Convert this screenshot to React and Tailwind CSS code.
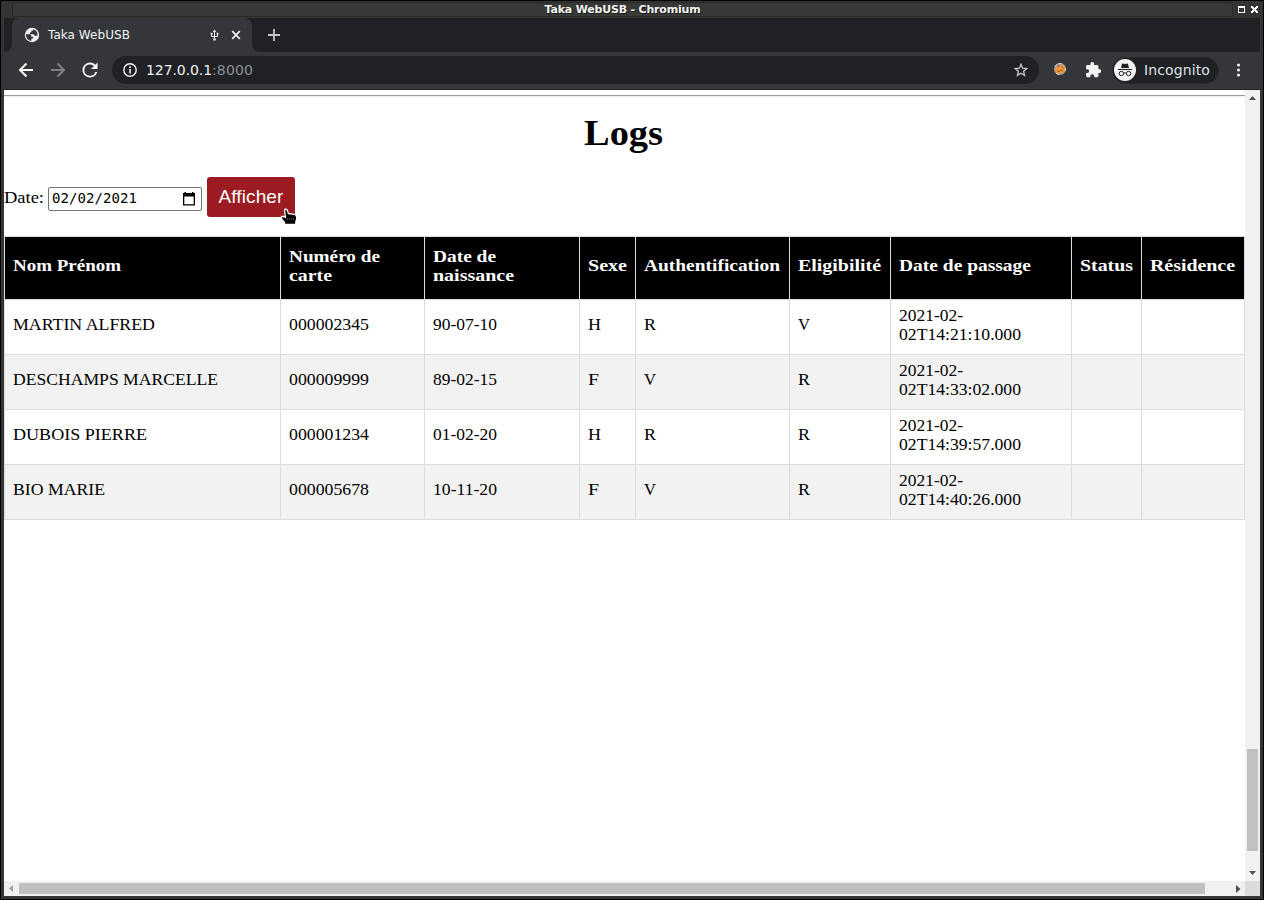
import { useLayoutEffect, useRef, useState } from "react";

/* Text that takes exactly `w` pixels: tracked, or widened when `stretch` is set. */
function Fit({ w, children, className = "", stretch = false }) {
  const ref = useRef(null);
  const [style, setStyle] = useState({});
  useLayoutEffect(() => {
    const el = ref.current;
    el.style.letterSpacing = "0px";
    el.style.transform = "none";
    const natural = el.getBoundingClientRect().width;
    const next = stretch
      ? { letterSpacing: "0px", transform: "scaleX(" + w / natural + ")" }
      : { letterSpacing: (w - natural) / children.length + "px" };
    Object.assign(el.style, next);
    setStyle(next);
  }, [w, children, stretch]);
  return (
    <span className={"inline-block whitespace-pre text-left " + className} style={{ width: w + "px" }}>
      <span ref={ref} className="inline-block origin-left" style={style}>{children}</span>
    </span>
  );
}

const columns = [
  { w: "w-[276px]", lines: [["Nom Prénom", 108]] },
  { w: "w-[144px]", lines: [["Numéro de", 91], ["carte", 43]] },
  { w: "w-[155px]", lines: [["Date de", 63], ["naissance", 81]] },
  { w: "w-[56px]", lines: [["Sexe", 39]] },
  { w: "w-[154px]", lines: [["Authentification", 136]] },
  { w: "w-[101px]", lines: [["Eligibilité", 83]] },
  { w: "w-[181px]", lines: [["Date de passage", 132]] },
  { w: "w-[70px]", lines: [["Status", 53]] },
  { w: "w-[103px]", lines: [["Résidence", 85]] },
];

const rows = [
  [["MARTIN ALFRED", 142], "000002345", "90-07-10", ["H", 13], ["R", 12], ["V", 12], "02T14:21:10.000"],
  [["DESCHAMPS MARCELLE", 205], "000009999", "89-02-15", ["F", 11], ["V", 12], ["R", 12], "02T14:33:02.000"],
  [["DUBOIS PIERRE", 134], "000001234", "01-02-20", ["H", 13], ["R", 12], ["R", 12], "02T14:39:57.000"],
  [["BIO MARIE", 92], "000005678", "10-11-20", ["F", 11], ["V", 12], ["R", 12], "02T14:40:26.000"],
];

function TitleBar() {
  return (
    <div className="flex h-[18px] shrink-0 items-center border-t border-black bg-[#343532]">
      <div className="ml-[11px] flex h-[15px] w-[1221px] items-center justify-center rounded-xs border border-[#292a28] bg-[#383936] font-['DejaVu_Sans'] text-[11px] font-bold leading-none text-[#f2f2f0]">
        <Fit w={156} className="[text-shadow:1px_1px_0_#1c1c1a]">Taka WebUSB - Chromium</Fit>
      </div>
      <svg className="ml-1 h-[11px] w-[24px]" viewBox="0 0 24 11" shapeRendering="crispEdges">
        <path d="M1 2h7v7H1z M2 4v4h5V4z" fill="#fff" fillRule="evenodd" />
        <path d="M14 2h2v1h1v1h1V3h1V2h2v2h-1v1h-1v1h1v1h1v2h-2V8h-1V7h-1v1h-1v1h-2V7h1V6h1V5h-1V4h-1z" fill="#fff" />
      </svg>
    </div>
  );
}

function TabStrip() {
  return (
    <div className="flex h-[34px] shrink-0 bg-[#202124]">
      <div className="flex h-[34px] w-2 bg-[#35363a]">
        <div className="w-2 rounded-br-lg bg-[#202124]" />
      </div>
      <div className="flex h-[34px] w-[240px] items-center rounded-t-lg bg-[#35363a] pl-3">
        <svg className="size-4" viewBox="0 0 16 16">
          <circle cx="8" cy="8" r="7.2" fill="#f1f3f4" />
          <path d="M1.900 7.200h3.500c1.200 0 1.800.7 1.800 1.600v1h2v1.700H7.400v2.200C4.300 13.700 1.900 11.200 1.900 7.200z M9.300 2.200v1.300H7.400v1.700H6V7.200h3c1.200 0 1.500.8 1.500 1.600h2.200c.4 0 .6.300.6.700 1-3.300-.7-6.500-4-7.300z" fill="#35363a" />
        </svg>
        <Fit w={82} className="ml-2 font-['DejaVu_Sans'] text-[12px] leading-4 text-[#f1f3f4]">Taka WebUSB</Fit>
        <svg className="ml-[78px] h-[14px] w-[12px]" viewBox="0 0 12 14" fill="none" stroke="#f1f3f4">
          <path d="M6.500 3v8M3.500 6v2.500h6V6" strokeWidth="1" />
          <path d="M6.500 1.500 4.800 4h3.400z M5.300 10.500h2.400v2H5.300z M2.700 4.700h1.800v1.800H2.700z M8.600 4.700h1.800v1.800H8.600z" fill="#f1f3f4" stroke="none" />
        </svg>
        <svg className="ml-[11px] size-[10px]" viewBox="0 0 10 10" stroke="#f1f3f4" strokeWidth="1.700"><path d="m1.200 1.200 7.600 7.600m0-7.600L1.200 8.800" /></svg>
      </div>
      <div className="flex h-[34px] w-2 bg-[#35363a]">
        <div className="w-2 rounded-bl-lg bg-[#202124]" />
      </div>
      <svg className="ml-2 mt-[11px] size-3" viewBox="0 0 12 12" stroke="#c3c5c8" strokeWidth="1.800"><path d="M0 6h12M6 0v12" /></svg>
    </div>
  );
}

function Toolbar() {
  return (
    <div className="flex h-[38px] shrink-0 items-center border-b border-[#222326] bg-[#35363a] font-['DejaVu_Sans'] text-[14px] leading-none text-[#f1f3f4]">
      <svg className="ml-[14px] mb-px size-4" viewBox="0 0 16 16" fill="none" stroke="#f8f9fa" strokeWidth="2"><path d="M15 8H2.500M8.500 1.500 2 8l6.500 6.500" /></svg>
      <svg className="ml-4 mb-px size-4" viewBox="0 0 16 16" fill="none" stroke="#7f8184" strokeWidth="2"><path d="M1 8h12.500M7.500 1.500 14 8l-6.500 6.500" /></svg>
      <svg className="ml-4 mb-px size-4" viewBox="0 0 16 16"><path d="M13.650 2.350A8 8 0 1 0 15.730 10h-2.080A6 6 0 1 1 8 2c1.660 0 3.140.69 4.220 1.780L9 7h7V0z" transform="translate(.5 .5) scale(.94)" fill="#f8f9fa" /></svg>
      <div className="ml-[14px] mb-px flex h-7 w-[927px] items-center rounded-full bg-[#202124] pl-[11px]">
        <svg className="size-[14px]" viewBox="0 0 14 14" fill="none" stroke="#f1f3f4" strokeWidth="1.400"><circle cx="7" cy="7" r="6.200" /><path d="M7 6v4.400M7 3.300v1.600" strokeWidth="1.600" /></svg>
        <Fit w={66} className="ml-[9px]">127.0.0.1</Fit>
        <Fit w={41} className="text-[#8d9094]">:8000</Fit>
        <svg className="ml-[761px] size-[14px]" viewBox="0 0 14 14" fill="none" stroke="#c6c8ca" strokeWidth="1.300"><path d="m7 1.300 1.600 3.900 4.200.35-3.200 2.750 1 4.100L7 10.200l-3.600 2.200 1-4.100L1.200 5.550l4.200-.35z" /></svg>
      </div>
      <svg className="ml-[14px] mb-[3px] size-[14px]" viewBox="0 0 14 14">
        <circle cx="7" cy="7" r="6" fill="#ad9c8d" /><path d="M1.500 7.500 3.500 5l3.500.5L9.500 2.500l2 2 .3 4-2 2.500-3.800.5-3-1.500z" fill="#f39433" /><path d="m4 3.500 2.500.8M4 8.500l2 1L8 8l2 1M8.500 5l2 1.500" fill="none" stroke="#9a5826" /><path d="M2 4.500 4 2.200M5.500 1.500h3M3 11.300l3 1.300M12.500 6v3" fill="none" stroke="#d4d8dc" />
      </svg>
      <svg className="ml-[18px] mb-px size-4" viewBox="1 1 21 22"><path fill="#f1f3f4" d="M20.500 11H19V7c0-1.100-.9-2-2-2h-4V3.500a2.500 2.500 0 0 0-5 0V5H4c-1.100 0-2 .9-2 2v3.800h1.500a2.700 2.700 0 0 1 0 5.400H2V20c0 1.100.9 2 2 2h3.800v-1.500a2.700 2.700 0 0 1 5.400 0V22H17c1.100 0 2-.9 2-2v-4h1.500a2.500 2.500 0 0 0 0-5z" /></svg>
      <div className="ml-[11px] mb-px flex h-[27px] w-[107px] items-center rounded-full border border-[#2a2b2e] bg-[#202124] pl-px">
        <svg className="size-[22px]" viewBox="0 0 22 22"><circle cx="11" cy="11" r="11" fill="#f1f3f4" /><path d="M4 10.100h14v1H4z M7 9l1-4 .9-.5 2.100.5 2.100-.5.9.5 1 4z" fill="#202124" /><g fill="none" stroke="#202124" strokeWidth="1"><circle cx="7.400" cy="14.500" r="2.200" /><circle cx="14.600" cy="14.500" r="2.200" /><path d="M9.600 14.300q1.400-.8 2.800 0" /></g></svg>
        <Fit w={66} className="ml-[8px] text-[#dfe1e5]">Incognito</Fit>
      </div>
      <svg className="ml-[17px] mb-px h-[14px] w-1" viewBox="0 0 4 14" fill="#f1f3f4"><circle cx="2.500" cy="2" r="1.500" /><circle cx="2.500" cy="7" r="1.500" /><circle cx="2.500" cy="12" r="1.500" /></svg>
    </div>
  );
}

function DateForm() {
  return (
    <div className="mt-[23px] flex h-10 items-center">
      <Fit w={40} stretch>Date:</Fit>
      <div className="ml-1 mt-1 flex h-6 w-[154px] items-center rounded-[2px] border border-[#767676] pl-[3px] font-['DejaVu_Sans_Mono'] text-[14px]">
        <Fit w={85} className="mb-0.5 mr-px leading-5">02/02/2021</Fit>
        <svg className="mb-px ml-[44px] h-[14px] w-[14px]" viewBox="0 0 14 14"><path d="M2.500 0h1.500v1h6V0h1.500v1h1.500v12.500H1V1h1.500z M2.300 4.500v7.700h9.400V4.500z" fill="#000" fillRule="evenodd" /></svg>
      </div>
      <div className="relative ml-[5px] flex h-10 w-[88px] items-center justify-center rounded-[3px] bg-[#9c1b22] pb-0.5 font-['Liberation_Sans'] text-[19px] text-white">
        <Fit w={65}>Afficher</Fit>
        <svg className="absolute left-[73px] top-[31px] h-[18px] w-[18px]" viewBox="0 0 18 18">
          <path d="M4.500 2C4.500 1 6.700 1 7.200 2l1.200 3.500 6 .8 1.500 1 .8 2-.3 3.200-.6.800v3.200H4.500v-2L1.500 11V8.500H4l1.500 1z" fill="#000" stroke="#fff" strokeWidth="1.300" strokeLinejoin="round" />
          <path d="M7.500 10v2M9.500 10v2M11.500 10v2M13.500 10v2" stroke="#555" strokeWidth=".8" />
        </svg>
      </div>
    </div>
  );
}

function LogTable() {
  return (
    <table className="mt-[19px] w-[1241px] table-fixed border-collapse text-left">
      <thead>
        <tr className="h-[63px] bg-black text-[17.500px] font-bold leading-[19px] text-white">
          {columns.map((c) => (
            <th key={c.lines[0][0]} className={c.w + " border border-[#ddd] p-0 pl-2 " + (c.lines.length > 1 ? "pb-1" : "pb-1.5")}>
              {c.lines.map(([t, w]) => <div key={t} className="h-[19px]"><Fit w={w} stretch>{t}</Fit></div>)}
            </th>
          ))}
        </tr>
      </thead>
      <tbody>
        {rows.map((r) => (
          <tr key={r[1]} className="h-[55px] leading-[19px] even:bg-[#f2f2f2]">
            <td className="border border-[#ddd] p-0 pb-1.5 pl-2"><Fit w={r[0][1]} stretch>{r[0][0]}</Fit></td>
            <td className="border border-[#ddd] p-0 pb-1.5 pl-2"><Fit w={80} stretch>{r[1]}</Fit></td>
            <td className="border border-[#ddd] p-0 pb-1.5 pl-2"><Fit w={64} stretch>{r[2]}</Fit></td>
            {[3, 4, 5].map((i) => <td key={i} className="border border-[#ddd] p-0 pb-1.5 pl-2"><Fit w={r[i][1]} stretch>{r[i][0]}</Fit></td>)}
            <td className="border border-[#ddd] p-0 pb-[5px] pl-2">
              <div className="h-[19px]"><Fit w={64} stretch>2021-02-</Fit></div>
              <div className="h-[19px]"><Fit w={122} stretch>{r[6]}</Fit></div>
            </td>
            <td className="border border-[#ddd]" />
            <td className="border border-[#ddd]" />
          </tr>
        ))}
      </tbody>
    </table>
  );
}

export default function App() {
  return (
    <div className="flex h-[900px] w-[1264px] flex-col overflow-hidden border-x border-b border-black bg-[#343532]">
      <TitleBar />
      <div className="mx-[3px] mb-[3px] flex min-h-0 flex-1 flex-col">
        <TabStrip />
        <Toolbar />
        <div className="flex min-h-0 flex-1 bg-white">
          <div className="flex w-[1241px] flex-col overflow-hidden pt-[5px] font-['Liberation_Serif'] text-[17.500px] leading-[19px] text-black">
            <div className="h-[2px] shrink-0 border-b border-[#eee] bg-[#999]" />
            <h1 className="mt-[18px] h-[39px] pr-0.5 text-center text-[35px] font-bold leading-[38px]"><Fit w={79} stretch>Logs</Fit></h1>
            <DateForm />
            <LogTable />
            <div className="mt-auto flex h-[15px] w-full shrink-0 items-center bg-[#f1f1f1]">
              <svg className="ml-1 h-[7px] w-[11px]" viewBox="0 0 11 7"><path d="M5 0v7L1 3.500z" fill="#a3a3a3" /></svg>
              <div className="h-[11px] w-[1186px] bg-[#c1c1c1]" />
              <svg className="ml-[31px] h-[8px] w-[5px]" viewBox="0 0 5 8"><path d="M0 0v8l4.500-4z" fill="#505050" /></svg>
            </div>
          </div>
          <div className="flex w-[15px] flex-col items-center bg-[#f1f1f1]">
            <svg className="mt-[6px] h-1 w-[7px]" viewBox="0 0 7 4"><path d="M0 4h7L3.500 0z" fill="#505050" /></svg>
            <div className="mt-[649px] h-[102px] w-[11px] bg-[#c1c1c1]" />
            <svg className="mt-5 h-1 w-[7px]" viewBox="0 0 7 4"><path d="M0 0h7L3.500 4z" fill="#505050" /></svg>
            <div className="mt-auto h-[15px] w-full bg-[#dcdcdc]" />
          </div>
        </div>
      </div>
    </div>
  );
}
